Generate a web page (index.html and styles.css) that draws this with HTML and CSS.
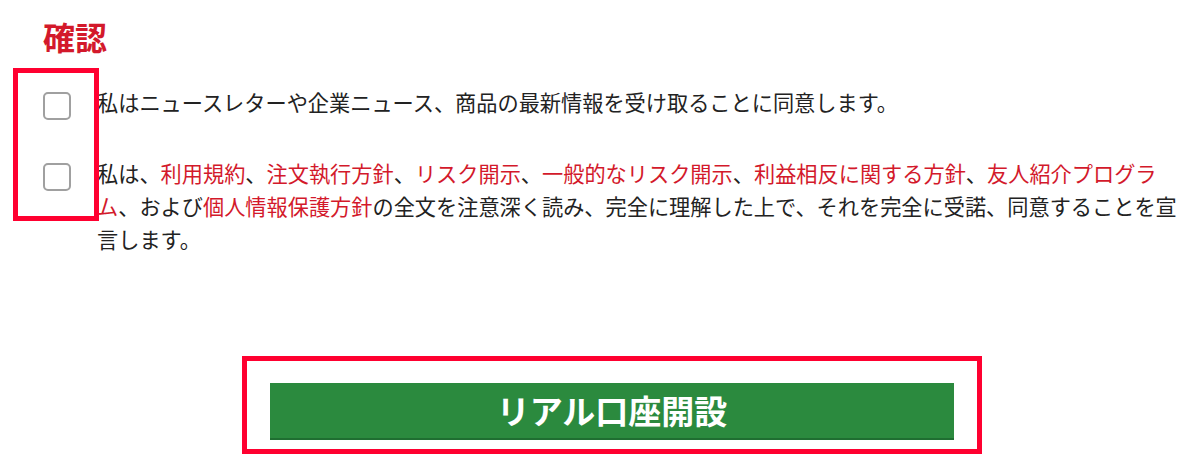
FILE: index.html
```html
<!DOCTYPE html>
<html lang="ja">
<head>
<meta charset="utf-8">
<title>確認</title>
<link rel="stylesheet" href="styles.css">
</head>
<body>
<main class="page">
  <h2 class="title">確認</h2>
  <section class="consent">
    <div class="annotation annotation-checks"></div>
    <label class="row">
      <input type="checkbox" class="check">
      <span class="text">私はニュースレターや企業ニュース、商品の最新情報を受け取ることに同意します。</span>
    </label>
    <label class="row">
      <input type="checkbox" class="check">
      <span class="text">私は、<a href="#" class="link">利用規約</a>、<a href="#" class="link">注文執行方針</a>、<a href="#" class="link">リスク開示</a>、<a href="#" class="link">一般的なリスク開示</a>、<a href="#" class="link">利益相反に関する方針</a>、<a href="#" class="link">友人紹介プログラム</a>、および<a href="#" class="link">個人情報保護方針</a>の全文を注意深く読み、完全に理解した上で、それを完全に受諾、同意することを宣言します。</span>
    </label>
  </section>
  <div class="cta-frame">
    <button type="button" class="cta">リアル口座開設</button>
  </div>
</main>
</body>
</html>
```
FILE: styles.css
```css
* { box-sizing: border-box; }
html, body { margin: 0; padding: 0; background: #fff; }
body {
  font-family: "Noto Sans CJK JP", "Noto Sans", sans-serif;
  color: #222;
}
.page {
  padding: 20px 0 0 43px;
  width: 1200px;
}
.title {
  margin: 0;
  font-size: 32px;
  line-height: 32px;
  font-weight: 700;
  color: #d3192b;
}
.consent {
  position: relative;
  margin-top: 33px;
  display: flex;
  flex-direction: column;
  gap: 36px;
}
.annotation-checks {
  position: absolute;
  left: -30px;
  top: -17px;
  width: 86px;
  height: 153px;
  border: 5px solid #ff0030;
  pointer-events: none;
}
.row {
  display: flex;
  align-items: flex-start;
  gap: 26px;
}
.check {
  appearance: none;
  -webkit-appearance: none;
  margin: 7px 0 0 0;
  width: 28px;
  height: 28px;
  flex: 0 0 28px;
  border: 2px solid #a0a0a0;
  border-radius: 5px;
  background: #fff;
}
.text {
  width: 1085px;
  font-size: 21.2px;
  line-height: 33px;
  color: #222;
}
.link {
  color: #d3192b;
  text-decoration: none;
}
.cta-frame {
  margin: 101px 0 0 199px;
  width: 740px;
  border: 5px solid #ff0030;
  padding: 22px 23px 9px 23px;
}
.cta {
  display: block;
  width: 100%;
  height: 57px;
  border: none;
  border-bottom: 2px solid #1f6e31;
  background: #2b8a3e;
  color: #fff;
  font-family: "Noto Sans CJK JP", sans-serif;
  font-size: 33px;
  font-weight: 700;
  line-height: 55px;
  padding: 0;
  cursor: pointer;
}
```
